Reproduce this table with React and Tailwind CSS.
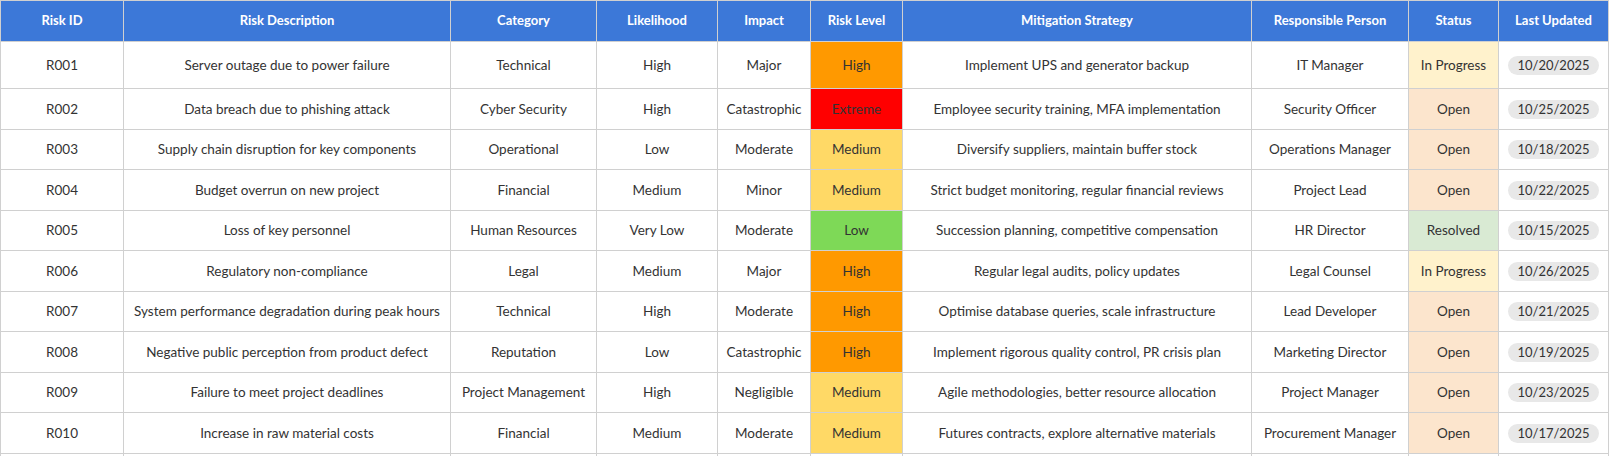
import React from "react";

const risks = [
  ["R001", "Server outage due to power failure", "Technical", "High", "Major", "High", "Implement UPS and generator backup", "IT Manager", "In Progress", "10/20/2025"],
  ["R002", "Data breach due to phishing attack", "Cyber Security", "High", "Catastrophic", "Extreme", "Employee security training, MFA implementation", "Security Officer", "Open", "10/25/2025"],
  ["R003", "Supply chain disruption for key components", "Operational", "Low", "Moderate", "Medium", "Diversify suppliers, maintain buffer stock", "Operations Manager", "Open", "10/18/2025"],
  ["R004", "Budget overrun on new project", "Financial", "Medium", "Minor", "Medium", "Strict budget monitoring, regular financial reviews", "Project Lead", "Open", "10/22/2025"],
  ["R005", "Loss of key personnel", "Human Resources", "Very Low", "Moderate", "Low", "Succession planning, competitive compensation", "HR Director", "Resolved", "10/15/2025"],
  ["R006", "Regulatory non-compliance", "Legal", "Medium", "Major", "High", "Regular legal audits, policy updates", "Legal Counsel", "In Progress", "10/26/2025"],
  ["R007", "System performance degradation during peak hours", "Technical", "High", "Moderate", "High", "Optimise database queries, scale infrastructure", "Lead Developer", "Open", "10/21/2025"],
  ["R008", "Negative public perception from product defect", "Reputation", "Low", "Catastrophic", "High", "Implement rigorous quality control, PR crisis plan", "Marketing Director", "Open", "10/19/2025"],
  ["R009", "Failure to meet project deadlines", "Project Management", "High", "Negligible", "Medium", "Agile methodologies, better resource allocation", "Project Manager", "Open", "10/23/2025"],
  ["R010", "Increase in raw material costs", "Financial", "Medium", "Moderate", "Medium", "Futures contracts, explore alternative materials", "Procurement Manager", "Open", "10/17/2025"],
];

const headers = ["Risk ID", "Risk Description", "Category", "Likelihood", "Impact", "Risk Level", "Mitigation Strategy", "Responsible Person", "Status", "Last Updated"];
const widths = [123, 327, 146, 121, 93, 92, 349, 157, 90, 110];

const levelBg = {
  High: "bg-[#ff9900]",
  Extreme: "bg-[#ff0000]",
  Medium: "bg-[#ffd966]",
  Low: "bg-[#7ed957]",
};

const statusBg = {
  "In Progress": "bg-[#fff2cc]",
  Open: "bg-[#fce5cd]",
  Resolved: "bg-[#d9ead3]",
};

export default function App() {
  return (
    <div className="bg-white min-h-screen font-['Lato',sans-serif] text-[13.5px] text-[#333333]">
      <table className="table-fixed border-collapse w-[1609px]">
        <colgroup>
          {widths.map((w, i) => (
            <col key={i} style={{ width: w }} />
          ))}
        </colgroup>
        <thead>
          <tr className="h-[41px] bg-[#3c78d8]">
            {headers.map((h) => (
              <th key={h} className="border border-[#d0d0d0] text-white text-[13px] font-bold text-center px-2">
                {h}
              </th>
            ))}
          </tr>
        </thead>
        <tbody>
          {risks.map((r, i) => (
            <tr key={r[0]} className={i === 0 ? "h-[47px]" : "h-[40.5px]"}>
              <td className="border border-[#d0d0d0] text-center">{r[0]}</td>
              <td className="border border-[#d0d0d0] text-center">{r[1]}</td>
              <td className="border border-[#d0d0d0] text-center">{r[2]}</td>
              <td className="border border-[#d0d0d0] text-center">{r[3]}</td>
              <td className="border border-[#d0d0d0] text-center">{r[4]}</td>
              <td className={`border border-[#d0d0d0] text-center ${levelBg[r[5]]}`}>{r[5]}</td>
              <td className="border border-[#d0d0d0] text-center">{r[6]}</td>
              <td className="border border-[#d0d0d0] text-center">{r[7]}</td>
              <td className={`border border-[#d0d0d0] text-center ${statusBg[r[8]]}`}>{r[8]}</td>
              <td className="border border-[#d0d0d0] text-center">
                <span className="inline-block bg-[#e8e8e8] rounded-full px-[9px] text-[13px] leading-[19px]">{r[9]}</span>
              </td>
            </tr>
          ))}
          <tr className="h-[40.5px]">
            {widths.map((w, i) => (
              <td key={i} className="border border-[#d0d0d0]" />
            ))}
          </tr>
        </tbody>
      </table>
    </div>
  );
}
